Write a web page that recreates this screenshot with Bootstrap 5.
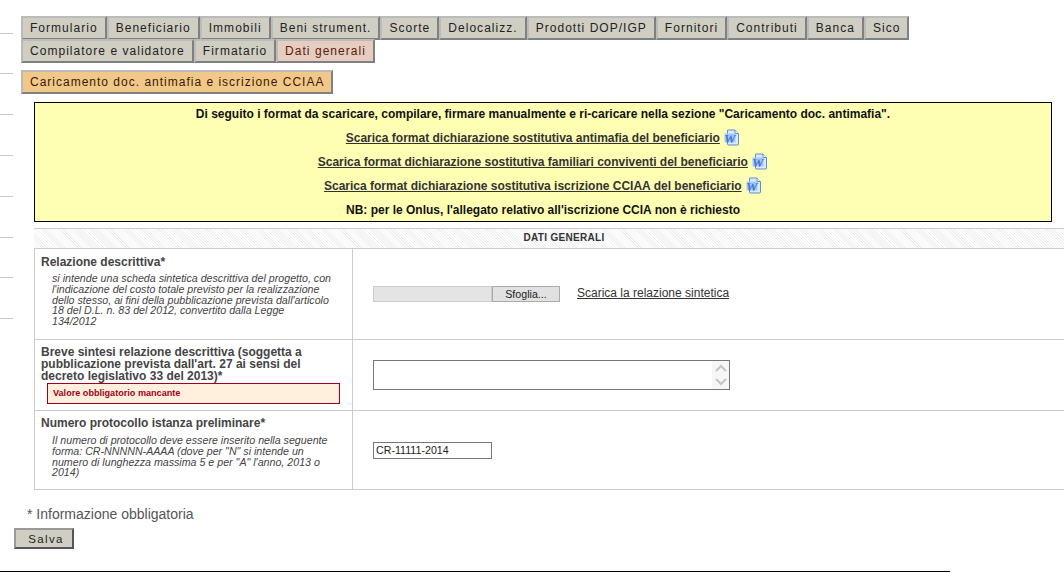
<!DOCTYPE html>
<html lang="it">
<head>
  <meta charset="UTF-8">
  <title>Dati generali</title>
  <link href="https://cdn.jsdelivr.net/npm/bootstrap@5.3.3/dist/css/bootstrap.min.css" rel="stylesheet">
  <style>
    html, body { height: 572px; overflow: hidden; }
    body {
      font-family: "Liberation Sans", Arial, sans-serif; font-size: 12px; color: #333; line-height: 1.15;
      background: repeating-linear-gradient(to bottom, transparent 0, transparent 32.6px, #c8c8c8 32.6px, #c8c8c8 33.6px, transparent 33.6px, transparent 40.8px) no-repeat 0 0 / 13px 325px #fff;
    }
    .page-wrap { width: 1064px; height: 572px; padding-top: 16px; display: flex; flex-direction: column; overflow: hidden; }
    .tab-rows { margin-left: 21px; width: 900px; }
    .tab-item {
      display: block; background: #d0cec3; color: #222; text-decoration: none; font-size: 12px; letter-spacing: 1.03px; height: 24px; line-height: 17px; padding: 2px 7px 0 7px;
      border: 2px solid; border-color: #bbb #808080 #808080 #bbb; white-space: nowrap;
    }
    .tab-row2 { margin-top: -1px; }
    .tab-on { background: #e6cdbf; color: #5a1a10; }
    .tab-sub { background: #f2c88a; color: #3a1a00; margin: 7px 0 0 21px; align-self: flex-start; letter-spacing: 1px; }
    .notice-box {
      margin: 8px 0 0 34px; width: 1018px; height: 120px; background: #ffffb3; border: 1px solid #000; text-align: center; color: #333; padding-top: 4px;
    }
    .notice-box p { margin: 0; height: 24px; line-height: 14px; font-size: 12px; }
    .notice-box b { color: #111; }
    .notice-box a { color: #333; font-weight: bold; }
    .notice-box svg { vertical-align: 0; margin: -4px 0 -4px 1px; }
    .section-head {
      margin: 6px 0 0 34px; height: 21px; line-height: 18px; border-top: 1px solid #ccc; text-align: center; font-size: 10px; font-weight: bold; color: #333; letter-spacing: .3px;
      width: 1060px;
      background: repeating-linear-gradient(45deg, #fff 0, #fff 1px, #f1f1f1 1px, #f1f1f1 2px);
    }
    .form-grid { margin-left: 34px; width: 1060px; border-top: 1px solid #ccc; border-left: 1px solid #ccc; }
    .form-line { display: flex; border-bottom: 1px solid #ccc; }
    .line-file { height: 91px; }
    .line-area { height: 71px; }
    .line-proto { height: 79px; }
    .label-cell { width: 318px; flex: none; border-right: 1px solid #ccc; padding: 7px 6px 0 6px; }
    .line-area .label-cell, .line-proto .label-cell { padding-top: 6px; }
    .value-cell { flex: 1; display: flex; align-items: center; padding-left: 20px; }
    .label-title { font-weight: bold; font-size: 12px; line-height: 12px; color: #444; }
    .label-note { font-style: italic; font-size: 10.67px; line-height: 10.7px; color: #444; margin: 5px 10px 0 11px; }
    .line-proto .label-note { margin-top: 6px; }
    .error-msg { margin: 1px 6px 0 6px; height: 21px; line-height: 18px; background: #ffefdc; border: 1px solid #a00020; color: #a00020; font-size: 9.1px; font-weight: bold; padding-left: 5px; }
    .file-field { width: 119px; height: 16px; background: #e4e4e4; border: 1px solid #ccc; }
    .file-btn { width: 68px; height: 16px; background: #e1e1e1; border: 1px solid #aaa; font-size: 10.67px; line-height: 14px; text-align: center; color: #222; }
    .file-link { margin-left: 17px; color: #333; font-size: 12px; }
    .fake-area { width: 357px; height: 30px; border: 1px solid #767676; display: flex; justify-content: flex-end; background: #fff; }
    .fake-scroll { width: 17px; background: #f6f6f6; display: flex; flex-direction: column; justify-content: space-around; align-items: center; }
    .proto-input { width: 119px; height: 17px; border: 1px solid #767676; font-size: 10.67px; line-height: 15px; padding-left: 2px; color: #222; }
    .req-note { margin: 16px 0 0 27px; font-size: 14px; line-height: 16px; color: #555; }
    .save-btn { margin: 6px 0 0 14px; width: 60px; height: 21px; background: #d0cec3; border: 2px solid; border-color: #999 #555 #555 #999; font-size: 11.5px; letter-spacing: 1.3px; text-align: center; line-height: 16px; padding: 0 0 0 4px; color: #222; }
    .foot-rule { width: 950px; border-top: 1px solid #000; margin-top: 22px; }
  </style>
</head>
<body>
  <div class="page-wrap">
    <div class="tab-rows">
      <div class="d-flex">
        <a class="tab-item" href="#">Formulario</a>
        <a class="tab-item" href="#">Beneficiario</a>
        <a class="tab-item" href="#">Immobili</a>
        <a class="tab-item" href="#">Beni strument.</a>
        <a class="tab-item" href="#">Scorte</a>
        <a class="tab-item" href="#">Delocalizz.</a>
        <a class="tab-item" href="#">Prodotti DOP/IGP</a>
        <a class="tab-item" href="#">Fornitori</a>
        <a class="tab-item" href="#">Contributi</a>
        <a class="tab-item" href="#">Banca</a>
        <a class="tab-item" href="#">Sico</a>
      </div>
      <div class="d-flex tab-row2">
        <a class="tab-item" href="#">Compilatore e validatore</a>
        <a class="tab-item" href="#">Firmatario</a>
        <a class="tab-item tab-on" href="#">Dati generali</a>
      </div>
    </div>
    <a class="tab-item tab-sub" href="#">Caricamento doc. antimafia e iscrizione CCIAA</a>

    <div class="notice-box">
      <p><b>Di seguito i format da scaricare, compilare, firmare manualmente e ri-caricare nella sezione "Caricamento doc. antimafia".</b></p>
      <p><a href="#">Scarica format dichiarazione sostitutiva antimafia del beneficiario</a> <svg width="16" height="17" viewBox="0 0 16 17"><path d="M3.5 1H11l3.5 3.5V15a1 1 0 0 1-1 1h-9a1 1 0 0 1-1-1z" fill="#dcebfb" stroke="#5a8fd8"/><path d="M11 1v3.5h3.5" fill="#f4f9ff" stroke="#5a8fd8"/><rect x="0.5" y="4.5" width="11" height="9" fill="#a9c6f0"/><text x="0" y="13.5" font-family="Liberation Serif" font-style="italic" font-weight="bold" font-size="13" fill="#3f78d8">W</text></svg></p>
      <p><a href="#">Scarica format dichiarazione sostitutiva familiari conviventi del beneficiario</a> <svg width="16" height="17" viewBox="0 0 16 17"><path d="M3.5 1H11l3.5 3.5V15a1 1 0 0 1-1 1h-9a1 1 0 0 1-1-1z" fill="#dcebfb" stroke="#5a8fd8"/><path d="M11 1v3.5h3.5" fill="#f4f9ff" stroke="#5a8fd8"/><rect x="0.5" y="4.5" width="11" height="9" fill="#a9c6f0"/><text x="0" y="13.5" font-family="Liberation Serif" font-style="italic" font-weight="bold" font-size="13" fill="#3f78d8">W</text></svg></p>
      <p><a href="#">Scarica format dichiarazione sostitutiva iscrizione CCIAA del beneficiario</a> <svg width="16" height="17" viewBox="0 0 16 17"><path d="M3.5 1H11l3.5 3.5V15a1 1 0 0 1-1 1h-9a1 1 0 0 1-1-1z" fill="#dcebfb" stroke="#5a8fd8"/><path d="M11 1v3.5h3.5" fill="#f4f9ff" stroke="#5a8fd8"/><rect x="0.5" y="4.5" width="11" height="9" fill="#a9c6f0"/><text x="0" y="13.5" font-family="Liberation Serif" font-style="italic" font-weight="bold" font-size="13" fill="#3f78d8">W</text></svg></p>
      <p><b>NB: per le Onlus, l'allegato relativo all'iscrizione CCIA non è richiesto</b></p>
    </div>

    <div class="section-head">DATI GENERALI</div>

    <div class="form-grid">
      <div class="form-line line-file">
        <div class="label-cell">
          <div class="label-title">Relazione descrittiva*</div>
          <div class="label-note">si intende una scheda sintetica descrittiva del progetto, con l'indicazione del costo totale previsto per la realizzazione dello stesso, ai fini della pubblicazione prevista dall'articolo 18 del D.L. n. 83 del 2012, convertito dalla Legge<br>134/2012</div>
        </div>
        <div class="value-cell">
          <div class="file-field"></div>
          <div class="file-btn">Sfoglia...</div>
          <a class="file-link" href="#">Scarica la relazione sintetica</a>
        </div>
      </div>
      <div class="form-line line-area">
        <div class="label-cell">
          <div class="label-title">Breve sintesi relazione descrittiva (soggetta a pubblicazione prevista dall'art. 27 ai sensi del decreto legislativo 33 del 2013)*</div>
          <div class="error-msg">Valore obbligatorio mancante</div>
        </div>
        <div class="value-cell">
          <div class="fake-area">
            <div class="fake-scroll">
              <svg width="12" height="8" viewBox="0 0 12 8"><path d="M1 7l5-5 5 5" fill="none" stroke="#c4c4c4" stroke-width="2"/></svg>
              <svg width="12" height="8" viewBox="0 0 12 8"><path d="M1 1l5 5 5-5" fill="none" stroke="#c4c4c4" stroke-width="2"/></svg>
            </div>
          </div>
        </div>
      </div>
      <div class="form-line line-proto">
        <div class="label-cell">
          <div class="label-title">Numero protocollo istanza preliminare*</div>
          <div class="label-note">Il numero di protocollo deve essere inserito nella seguente forma: CR-NNNNN-AAAA (dove per "N" si intende un numero di lunghezza massima 5 e per "A" l'anno, 2013 o 2014)</div>
        </div>
        <div class="value-cell">
          <div class="proto-input">CR-11111-2014</div>
        </div>
      </div>
    </div>

    <div class="req-note">* Informazione obbligatoria</div>
    <button type="button" class="save-btn">Salva</button>
    <div class="foot-rule"></div>
  </div>
  <script src="https://cdn.jsdelivr.net/npm/bootstrap@5.3.3/dist/js/bootstrap.bundle.min.js"></script>
</body>
</html>
